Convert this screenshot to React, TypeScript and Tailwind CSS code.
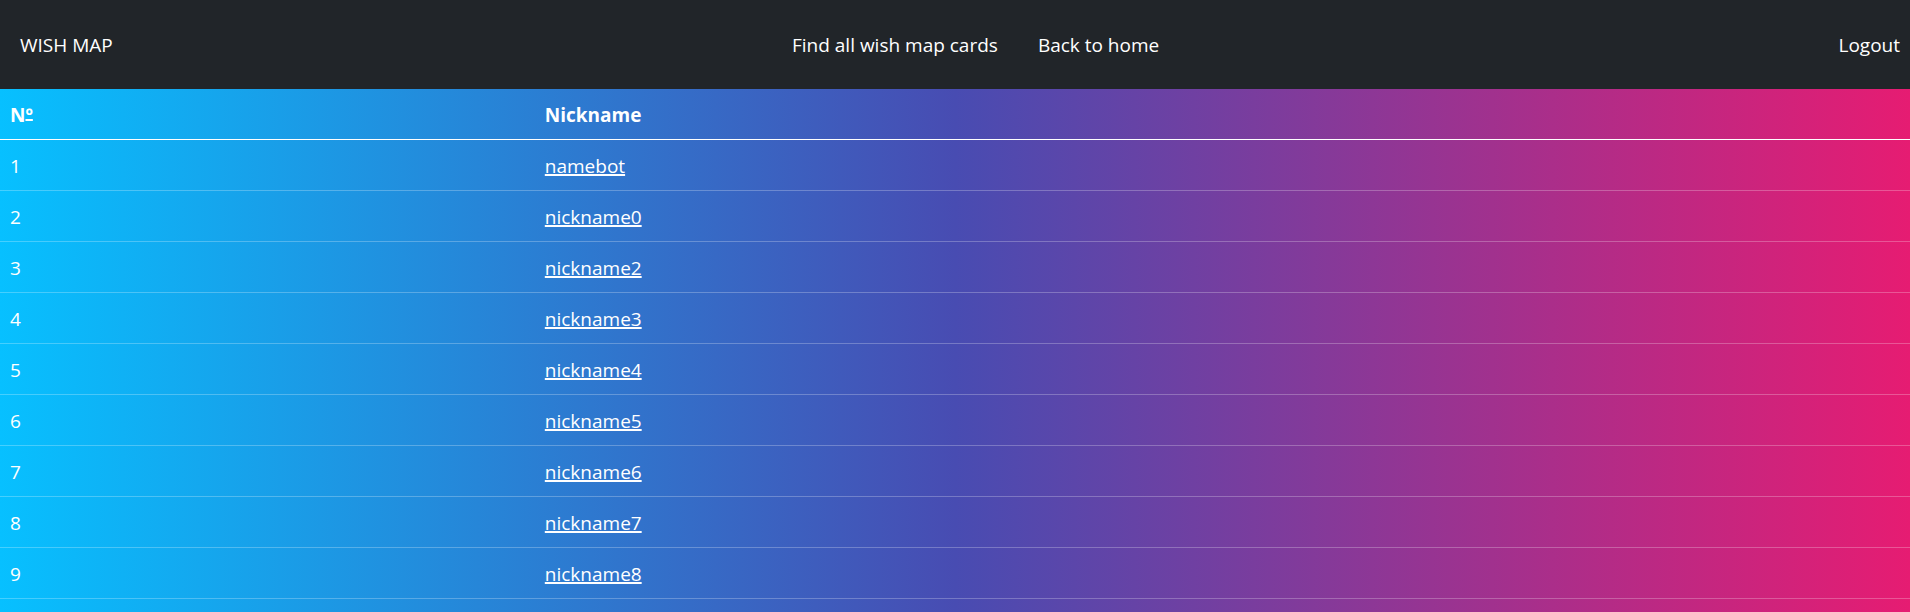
const nicknames = [
  'namebot',
  'nickname0',
  'nickname2',
  'nickname3',
  'nickname4',
  'nickname5',
  'nickname6',
  'nickname7',
  'nickname8',
];

function NavBar() {
  return (
    <header className="bg-[#212529] pt-[31px] pb-[29px]">
      <nav className="flex items-center justify-between leading-[29px]">
        <a href="#" className="px-5">WISH MAP</a>
        <div className="flex">
          <a href="#cards" className="px-5">Find all wish map cards</a>
          <a href="#home" className="px-5">Back to home</a>
        </div>
        <a href="#logout" className="pl-5 pr-[10px]">Logout</a>
      </nav>
    </header>
  );
}

export default function App() {
  return (
    <div className="min-h-screen bg-[linear-gradient(to_right,#07c0ff_0%,#2686d8_25%,#484cb2_50%,#e61c72_100%)] font-['Segoe_UI','Open_Sans',sans-serif] text-[19px] text-white">
      <NavBar />
      <main>
        <table className="w-full table-fixed border-separate border-spacing-0 text-left leading-[30px]">
          <thead>
            <tr>
              <th scope="col" className="w-[28%] border-b border-white px-[10px] pt-[11px] pb-[9px] font-bold">
                N<span className="underline decoration-2 underline-offset-[-3px]">º</span>
              </th>
              <th scope="col" className="border-b border-white px-[10px] pt-[11px] pb-[9px] font-bold">Nickname</th>
            </tr>
          </thead>
          <tbody>
            {nicknames.map((name, i) => (
              <tr key={name}>
                <td className="border-b border-white/25 px-[10px] pt-[11px] pb-[9px]">{i + 1}</td>
                <td className="border-b border-white/25 px-[10px] pt-[11px] pb-[9px]">
                  <a href={`#${name}`} className="underline decoration-2 underline-offset-1">{name}</a>
                </td>
              </tr>
            ))}
          </tbody>
        </table>
      </main>
    </div>
  );
}
